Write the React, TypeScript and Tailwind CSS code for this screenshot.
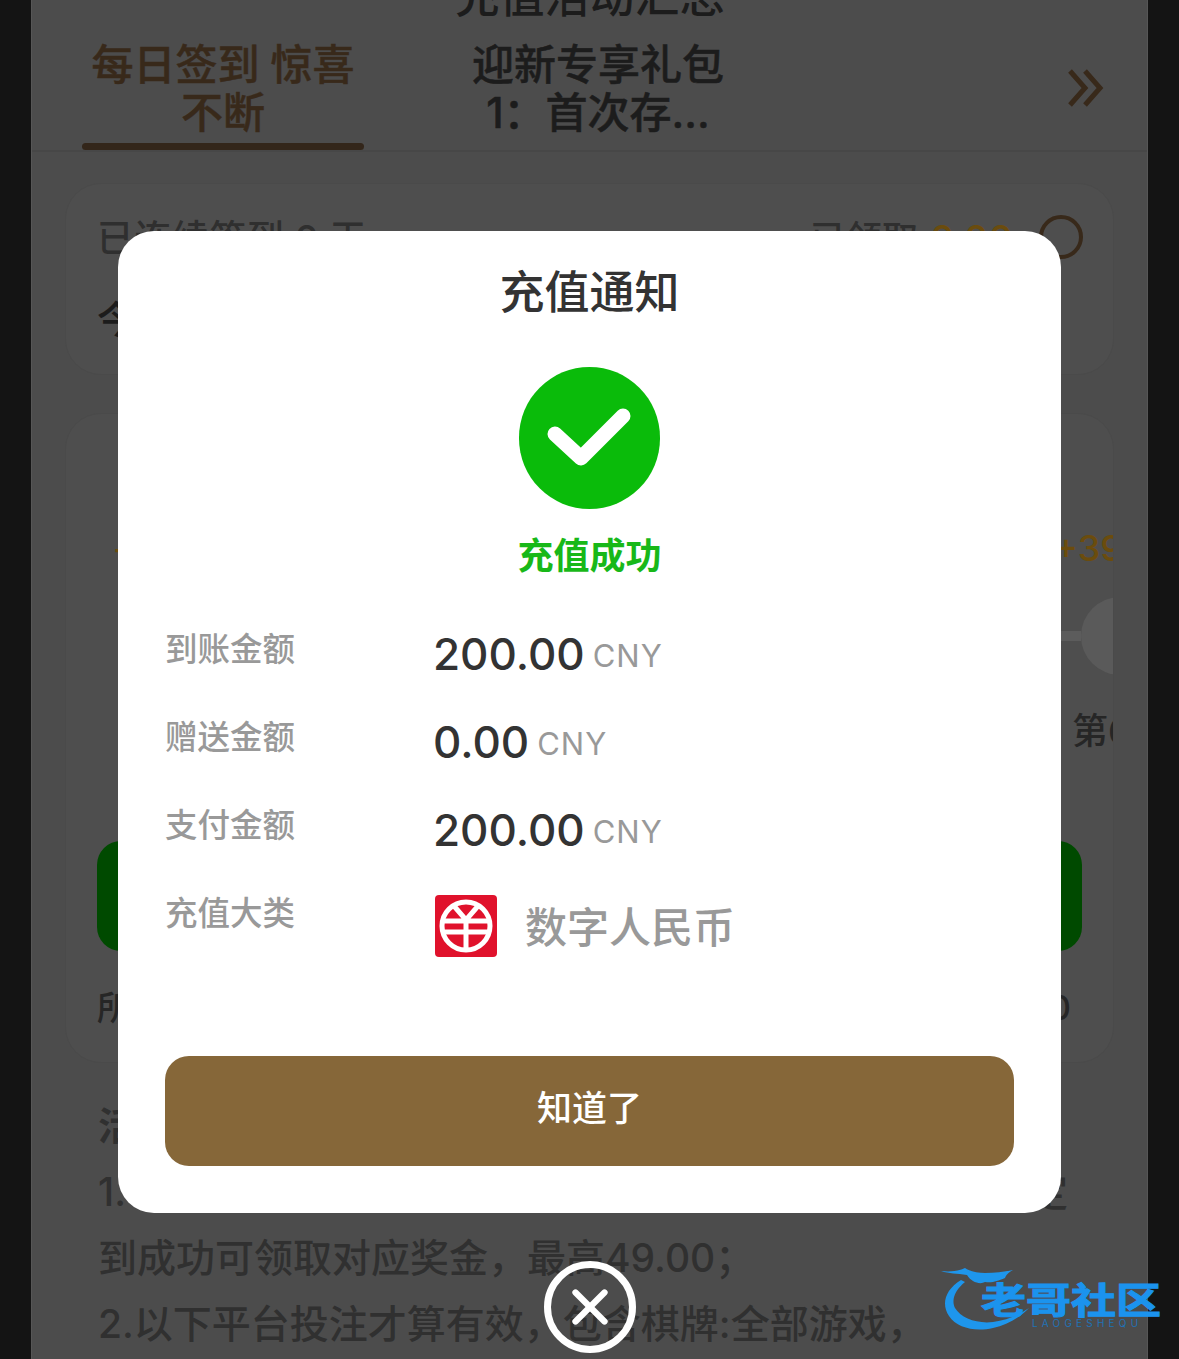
import { X } from 'lucide-react';

const cjk = 'font-["Inter","Noto_Sans_CJK_SC",sans-serif]';

const rows = [
  { label: '到账金额', value: '200.00' },
  { label: '赠送金额', value: '0.00' },
  { label: '支付金额', value: '200.00' },
];

function Background() {
  return (
    <div className="ml-[31px] flex h-[1359px] w-[1117px] flex-col overflow-hidden border-x border-[#565656] bg-[#4c4c4c]">
      <div className="-mt-[25px] h-[44px] shrink-0 text-center text-[45px] leading-[44px] font-medium text-[#1c1c1c]">充值活动汇总</div>
      <div className="flex h-[133px] shrink-0 border-b-2 border-[#474747] pl-[50px]">
        <div className="flex w-[282px] shrink-0 flex-col">
          <div className="mt-[22px] flex-1 text-center text-[42px] leading-[48px] font-medium text-[#38291a] [-webkit-text-stroke:0.5px_#38291a]">
            每日签到 惊喜
            <br />
            不断
          </div>
          <div className="h-[7px] rounded-full bg-[#33261a]" />
        </div>
        <div className="ml-[79px] mt-[22px] w-[310px] text-center text-[42px] leading-[48px] font-medium text-[#1c1c1c] [-webkit-text-stroke:0.5px_#1c1c1c]">
          迎新专享礼包
          <br />
          1：首次存...
        </div>
        <svg className="ml-[314px] mt-[49px] shrink-0" width="38" height="40" viewBox="0 0 38 40" fill="none" stroke="#38291a" strokeWidth="5">
          <path d="M3 3l15 17L3 37M18 3l15 17-15 17" />
        </svg>
      </div>

      <div className="mx-[33px] mt-[31px] flex h-[192px] shrink-0 flex-col rounded-[36px] border border-[#4a4a4a] bg-[#4e4e4e] px-[31px] pt-[33px]">
        <div className="flex items-center justify-between">
          <span className="text-[37px] leading-[44px] font-medium tracking-[0.5px] text-[#2f2f2f]">已连续签到 0 天</span>
          <div className="flex items-center">
            <span className="text-[36px] leading-[44px] font-medium text-[#2f2f2f]">已领取</span>
            <span className="ml-[12px] text-[38px] leading-[44px] font-medium text-[#6b4c0d]">0.00</span>
            <span className="ml-[26px] -mr-[1px] -mt-[4px] h-[44px] w-[44px] rounded-full border-[4px] border-[#38291a]" />
          </div>
        </div>
        <div className="mt-[36px] text-[38px] leading-[44px] font-medium text-[#1c1c1c]">今</div>
      </div>

      <div className="mx-[33px] mt-[38px] flex h-[650px] shrink-0 flex-col overflow-hidden rounded-[36px] border border-[#4a4a4a] bg-[#4e4e4e]">
        <div className="mt-[112px] flex h-[44px] items-center justify-between pl-[46px] text-[36px] leading-[44px] font-medium text-[#6b4c0d]">
          <span>+</span>
          <span className="-mr-[10px] whitespace-nowrap">+39</span>
        </div>
        <div className="mt-[27px] flex h-[78px] items-center justify-end">
          <div className="h-[10px] w-[60px] bg-[#5c5c5c]" />
          <div className="-mr-[46px] h-[78px] w-[78px] shrink-0 rounded-full bg-[#5a5a5a]" />
        </div>
        <div className="mt-[34px] flex h-[44px] justify-end">
          <span className="w-[41px] overflow-hidden text-[36px] leading-[44px] font-medium whitespace-nowrap text-[#262626]">第6</span>
        </div>
        <div className="mx-[31px] mt-[88px] h-[110px] shrink-0 rounded-[24px] bg-[#004a00]" />
        <div className="mt-[35px] flex justify-between pl-[31px] pr-[42px] text-[34px] leading-[44px] font-medium text-[#262626]">
          <span>所</span>
          <span>0</span>
        </div>
      </div>

      <div className="px-[66px] pt-[30px] text-[39px] leading-[66px] font-medium text-[#303030]">
        <div className="font-bold">活动规则</div>
        <div className="flex justify-between">
          <span>1.</span>
          <span className="mr-[13px]">定</span>
        </div>
        <div className="whitespace-nowrap">到成功可领取对应奖金，最高49.00；</div>
        <div className="whitespace-nowrap">2.以下平台投注才算有效，包含棋牌:全部游戏，</div>
      </div>
    </div>
  );
}

function CnyIcon() {
  return (
    <svg width="64" height="64" viewBox="0 0 64 64" fill="none">
      <rect x="1" y="1" width="62" height="62" rx="4" fill="#e0122c" />
      <circle cx="32" cy="32" r="24" stroke="#fff" strokeWidth="5" />
      <path d="M20 12l12 14 12-14M8 27h48M10 38h44M32 26v30" stroke="#fff" strokeWidth="5" />
    </svg>
  );
}

function NoticeModal() {
  return (
    <div className="absolute left-[118px] top-[231px] flex h-[982px] w-[943px] flex-col rounded-[36px] bg-white px-[47px]">
      <div className="mt-[36px] text-center text-[45px] leading-[52px] font-medium text-[#333]">充值通知</div>
      <div className="mt-[48px] flex h-[142px] w-full justify-center">
        <div className="-ml-[1px] flex h-[142px] w-[141px] items-center justify-center rounded-full bg-[#0abb0a]">
          <svg width="84" height="60" viewBox="0 0 84 60" fill="none">
            <path d="M8 26l26 24L76 8" stroke="#fff" strokeWidth="15" strokeLinecap="round" strokeLinejoin="round" />
          </svg>
        </div>
      </div>
      <div className="mt-[25px] text-center text-[36px] leading-[44px] font-bold text-[#18b818]">充值成功</div>
      <div className="mt-[50px] flex flex-col">
        {rows.map((row) => (
          <div key={row.label} className="flex h-[88px]">
            <div className="w-[269px] shrink-0 text-[32.5px] leading-[44px] font-medium text-[#999]">{row.label}</div>
            <div className="-ml-[1px] mt-[-2px] flex items-baseline whitespace-nowrap">
              <span className="text-[44px] leading-[56px] font-medium text-[#333]">{row.value}</span>
              <span className="ml-[8px] -translate-y-[3px] text-[31px] leading-[56px] tracking-[1px] text-[#999]">CNY</span>
            </div>
          </div>
        ))}
        <div className="flex h-[88px]">
          <div className="w-[269px] shrink-0 text-[32.5px] leading-[44px] font-medium text-[#999]">充值大类</div>
          <div className="mt-[2px] flex h-[64px] items-center">
            <CnyIcon />
            <span className="ml-[27px] mt-[3px] text-[42px] leading-[64px] font-medium text-[#999]">数字人民币</span>
          </div>
        </div>
      </div>
      <div className="mt-[76px] flex h-[110px] items-center justify-center rounded-[24px] bg-[#866739] pb-[6px] text-[35px] font-medium text-white">知道了</div>
    </div>
  );
}

function Watermark() {
  return (
    <div className="absolute left-[941px] top-[1264px] h-[72px] w-[224px]">
      <svg className="absolute left-0 top-0" width="92" height="72" viewBox="0 0 92 72" fill="none">
        <path d="M20 16C4 26 0 40 8 52c8 12 26 16 44 12 14-3 26-10 36-20-10 7-22 12-36 14C36 60 20 54 14 44c-4-8 0-18 10-26z" fill="#1e96ec" />
        <path d="M0 7c10 1 18 0 24-3 4 3 12 5 20 5 10 0 18-1 28-3-5 3-7 5-8 8-8 3-12 5-20 4-5 3-14 0-18-7C16 9 8 10 0 7z" fill="#1e96ec" />
      </svg>
      <div className="absolute left-[40px] top-[21px] origin-left scale-x-125 text-[36px] leading-[32px] font-bold whitespace-nowrap text-[#1b93ee] [-webkit-text-stroke:1px_#1b93ee]">老哥社区</div>
      <div className="absolute left-[91px] top-[54px] text-[10px] leading-[10px] tracking-[4.2px] whitespace-nowrap text-[#2272b4]">LAOGESHEQU</div>
    </div>
  );
}

export default function App() {
  return (
    <div className={`relative h-[1359px] w-full overflow-hidden bg-[#141414] ${cjk}`}>
      <Background />
      <NoticeModal />
      <div className="absolute left-[544px] top-[1261px] flex h-[92px] w-[92px] items-center justify-center rounded-full border-[7px] border-white">
        <X size={58} color="#fff" strokeWidth={2.6} />
      </div>
      <Watermark />
    </div>
  );
}
